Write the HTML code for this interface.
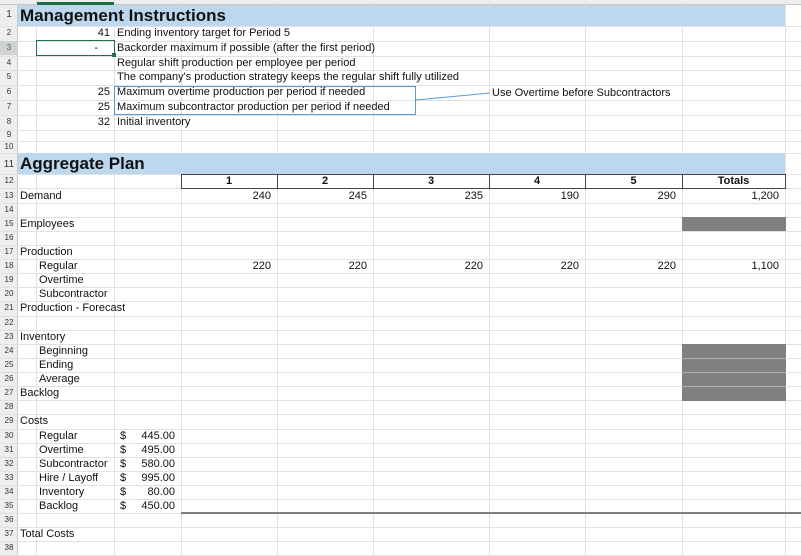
<!DOCTYPE html>
<html><head><meta charset="utf-8"><style>
body{margin:0;width:801px;height:556px;overflow:hidden;background:#fff;font-family:"Liberation Sans",Arial,sans-serif;position:relative}
div{position:absolute;box-sizing:border-box}
.h{left:0;width:801px;height:1px;background:#e1e1e1}
.v{top:0;width:1px;height:556px;background:#e1e1e1}
.n{left:0;width:18px;font-size:8px;color:#333;text-align:center;line-height:14px;height:14px}
.t{font-size:11px;line-height:14px;height:14px;white-space:nowrap;color:#111}
.r{text-align:right}
</style></head><body>
<div style="left:0;top:0;width:18px;height:556px;background:#eeeeee;border-right:1px solid #c8c8c8"></div>
<div style="left:0;top:0;width:801px;height:5px;background:#eeeeee;border-bottom:1px solid #c8c8c8"></div>
<div style="left:36px;top:2px;width:78px;height:3px;background:#1e7145"></div>
<!-- vertical grid -->
<div class="v" style="left:36px"></div><div class="v" style="left:114px"></div><div class="v" style="left:181px"></div><div class="v" style="left:277px"></div><div class="v" style="left:373px"></div><div class="v" style="left:489px"></div><div class="v" style="left:585px"></div><div class="v" style="left:682px"></div><div class="v" style="left:785px"></div>
<!-- horizontal grid -->
<div class="h" style="top:26px"></div><div class="h" style="top:41px"></div><div class="h" style="top:56px"></div><div class="h" style="top:70px"></div><div class="h" style="top:85px"></div><div class="h" style="top:100px"></div><div class="h" style="top:115px"></div><div class="h" style="top:130px"></div><div class="h" style="top:141px"></div><div class="h" style="top:153px"></div><div class="h" style="top:174px"></div>
<div class="h" style="top:188px"></div><div class="h" style="top:203px"></div><div class="h" style="top:217px"></div><div class="h" style="top:231px"></div><div class="h" style="top:245px"></div><div class="h" style="top:259px"></div><div class="h" style="top:273px"></div><div class="h" style="top:287px"></div><div class="h" style="top:301px"></div><div class="h" style="top:316px"></div><div class="h" style="top:330px"></div><div class="h" style="top:344px"></div><div class="h" style="top:358px"></div><div class="h" style="top:372px"></div><div class="h" style="top:386px"></div><div class="h" style="top:400px"></div><div class="h" style="top:414px"></div><div class="h" style="top:429px"></div><div class="h" style="top:443px"></div><div class="h" style="top:457px"></div><div class="h" style="top:471px"></div><div class="h" style="top:485px"></div><div class="h" style="top:499px"></div><div class="h" style="top:513px"></div><div class="h" style="top:527px"></div><div class="h" style="top:541px"></div><div class="h" style="top:555px"></div>
<!-- blue bands -->
<div style="left:18px;top:5px;width:767px;height:21px;background:#bdd7ee"></div>
<div style="left:18px;top:153px;width:767px;height:21px;background:#bdd7ee"></div>
<div class="t" style="left:20px;top:5px;height:21px;line-height:21px;font-size:17px;font-weight:bold">Management Instructions</div>
<div class="t" style="left:20px;top:153px;height:21px;line-height:21px;font-size:17px;font-weight:bold">Aggregate Plan</div>
<!-- row numbers -->
<div class="n" style="top:8px;font-size:10px">1</div><div class="n" style="top:26px">2</div><div class="n" style="top:41px;background:#d2d2d2;color:#1e7145">3</div><div class="n" style="top:56px">4</div><div class="n" style="top:70px">5</div><div class="n" style="top:85px">6</div><div class="n" style="top:100px">7</div><div class="n" style="top:115px">8</div><div class="n" style="top:128px">9</div><div class="n" style="top:140px">10</div><div class="n" style="top:158px;font-size:10px">11</div><div class="n" style="top:174px">12</div>
<div class="n" style="top:189px">13</div><div class="n" style="top:203px">14</div><div class="n" style="top:217px">15</div><div class="n" style="top:231px">16</div><div class="n" style="top:245px">17</div><div class="n" style="top:259px">18</div><div class="n" style="top:273px">19</div><div class="n" style="top:287px">20</div><div class="n" style="top:301px">21</div><div class="n" style="top:316px">22</div><div class="n" style="top:330px">23</div><div class="n" style="top:344px">24</div><div class="n" style="top:358px">25</div><div class="n" style="top:372px">26</div><div class="n" style="top:386px">27</div><div class="n" style="top:400px">28</div><div class="n" style="top:414px">29</div><div class="n" style="top:429px">30</div><div class="n" style="top:443px">31</div><div class="n" style="top:457px">32</div><div class="n" style="top:471px">33</div><div class="n" style="top:485px">34</div><div class="n" style="top:499px">35</div><div class="n" style="top:513px">36</div><div class="n" style="top:527px">37</div><div class="n" style="top:541px">38</div>
<!-- management instructions -->
<div class="t r" style="left:36px;width:74px;top:26px">41</div>
<div class="t" style="left:117px;top:26px">Ending inventory target for Period 5</div>
<div style="left:36px;top:40px;width:79px;height:16px;border:1.5px solid #1e7145"></div>
<div style="left:112px;top:53px;width:4px;height:4px;background:#1e7145"></div>
<div class="t r" style="left:36px;width:62px;top:41px">-</div>
<div class="t" style="left:117px;top:41px">Backorder maximum if possible (after the first period)</div>
<div class="t" style="left:117px;top:56px">Regular shift production per employee per period</div>
<div class="t" style="left:117px;top:70px">The company's production strategy keeps the regular shift fully utilized</div>
<div class="t r" style="left:36px;width:74px;top:85px">25</div>
<div class="t" style="left:117px;top:85px">Maximum overtime production per period if needed</div>
<div class="t r" style="left:36px;width:74px;top:100px">25</div>
<div class="t" style="left:117px;top:100px">Maximum subcontractor production per period if needed</div>
<div class="t r" style="left:36px;width:74px;top:115px">32</div>
<div class="t" style="left:117px;top:115px">Initial inventory</div>
<div style="left:114px;top:86px;width:302px;height:29px;border:1px solid #5b9bd5"></div>
<svg style="position:absolute;left:0;top:0" width="801" height="556"><line x1="416" y1="100" x2="490" y2="93" stroke="#5b9bd5" stroke-width="1"/></svg>
<div class="t" style="left:492px;top:86px">Use Overtime before Subcontractors</div>
<!-- header row 12 -->
<div style="left:181px;top:174px;width:605px;height:15px;border:1.5px solid #444;background:#fff"></div>
<div style="left:277px;top:174px;width:1px;height:15px;background:#444"></div><div style="left:373px;top:174px;width:1px;height:15px;background:#444"></div><div style="left:489px;top:174px;width:1px;height:15px;background:#444"></div><div style="left:585px;top:174px;width:1px;height:15px;background:#444"></div><div style="left:682px;top:174px;width:1px;height:15px;background:#444"></div>
<div class="t" style="left:181px;width:96px;top:174px;text-align:center;font-weight:bold">1</div>
<div class="t" style="left:277px;width:96px;top:174px;text-align:center;font-weight:bold">2</div>
<div class="t" style="left:373px;width:116px;top:174px;text-align:center;font-weight:bold">3</div>
<div class="t" style="left:489px;width:96px;top:174px;text-align:center;font-weight:bold">4</div>
<div class="t" style="left:585px;width:97px;top:174px;text-align:center;font-weight:bold">5</div>
<div class="t" style="left:682px;width:103px;top:174px;text-align:center;font-weight:bold">Totals</div>
<!-- labels -->
<div class="t" style="left:20px;top:189px">Demand</div>
<div class="t" style="left:20px;top:217px">Employees</div>
<div class="t" style="left:20px;top:245px">Production</div>
<div class="t" style="left:39px;top:259px">Regular</div>
<div class="t" style="left:39px;top:273px">Overtime</div>
<div class="t" style="left:39px;top:287px">Subcontractor</div>
<div class="t" style="left:20px;top:301px">Production - Forecast</div>
<div class="t" style="left:20px;top:330px">Inventory</div>
<div class="t" style="left:39px;top:344px">Beginning</div>
<div class="t" style="left:39px;top:358px">Ending</div>
<div class="t" style="left:39px;top:372px">Average</div>
<div class="t" style="left:20px;top:386px">Backlog</div>
<div class="t" style="left:20px;top:414px">Costs</div>
<div class="t" style="left:39px;top:429px">Regular</div>
<div class="t" style="left:39px;top:443px">Overtime</div>
<div class="t" style="left:39px;top:457px">Subcontractor</div>
<div class="t" style="left:39px;top:471px">Hire / Layoff</div>
<div class="t" style="left:39px;top:485px">Inventory</div>
<div class="t" style="left:39px;top:499px">Backlog</div>
<div class="t" style="left:20px;top:527px">Total Costs</div>
<!-- costs -->
<div class="t" style="left:120px;top:429px">$</div><div class="t r" style="left:130px;width:45px;top:429px">445.00</div>
<div class="t" style="left:120px;top:443px">$</div><div class="t r" style="left:130px;width:45px;top:443px">495.00</div>
<div class="t" style="left:120px;top:457px">$</div><div class="t r" style="left:130px;width:45px;top:457px">580.00</div>
<div class="t" style="left:120px;top:471px">$</div><div class="t r" style="left:130px;width:45px;top:471px">995.00</div>
<div class="t" style="left:120px;top:485px">$</div><div class="t r" style="left:130px;width:45px;top:485px">80.00</div>
<div class="t" style="left:120px;top:499px">$</div><div class="t r" style="left:130px;width:45px;top:499px">450.00</div>
<!-- data -->
<div class="t r" style="left:181px;width:90px;top:189px">240</div>
<div class="t r" style="left:277px;width:90px;top:189px">245</div>
<div class="t r" style="left:373px;width:110px;top:189px">235</div>
<div class="t r" style="left:489px;width:90px;top:189px">190</div>
<div class="t r" style="left:585px;width:91px;top:189px">290</div>
<div class="t r" style="left:682px;width:97px;top:189px">1,200</div>
<div class="t r" style="left:181px;width:90px;top:259px">220</div>
<div class="t r" style="left:277px;width:90px;top:259px">220</div>
<div class="t r" style="left:373px;width:110px;top:259px">220</div>
<div class="t r" style="left:489px;width:90px;top:259px">220</div>
<div class="t r" style="left:585px;width:91px;top:259px">220</div>
<div class="t r" style="left:682px;width:97px;top:259px">1,100</div>
<!-- gray fills -->
<div style="left:682px;top:217px;width:104px;height:14px;background:#808080"></div>
<div style="left:682px;top:344px;width:104px;height:57px;background:#808080"></div>
<div style="left:682px;top:358px;width:104px;height:1px;background:#b0b0b0"></div>
<div style="left:682px;top:372px;width:104px;height:1px;background:#b0b0b0"></div>
<div style="left:682px;top:386px;width:104px;height:1px;background:#b0b0b0"></div>
<div style="left:181px;top:512px;width:620px;height:2px;background:#808080"></div>
</body></html>
